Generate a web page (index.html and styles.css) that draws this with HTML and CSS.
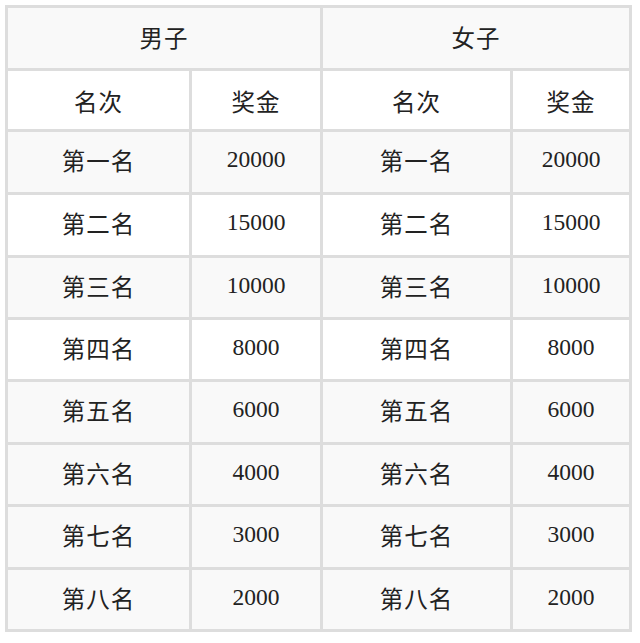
FILE: index.html
```html
<!DOCTYPE html>
<html lang="zh-CN">
<head>
<meta charset="utf-8">
<title>奖金</title>
<link rel="stylesheet" href="styles.css">
</head>
<body>
<table class="prize">
  <colgroup>
    <col class="c1"><col class="c2"><col class="c3"><col class="c4">
  </colgroup>
  <tr class="gray head"><td colspan="2">男子</td><td colspan="2">女子</td></tr>
  <tr class="white sub"><td>名次</td><td>奖金</td><td>名次</td><td>奖金</td></tr>
  <tr class="gray"><td>第一名</td><td class="num">20000</td><td>第一名</td><td class="num">20000</td></tr>
  <tr class="white"><td>第二名</td><td class="num">15000</td><td>第二名</td><td class="num">15000</td></tr>
  <tr class="gray"><td>第三名</td><td class="num">10000</td><td>第三名</td><td class="num">10000</td></tr>
  <tr class="white"><td>第四名</td><td class="num">8000</td><td>第四名</td><td class="num">8000</td></tr>
  <tr class="gray"><td>第五名</td><td class="num">6000</td><td>第五名</td><td class="num">6000</td></tr>
  <tr class="gray"><td>第六名</td><td class="num">4000</td><td>第六名</td><td class="num">4000</td></tr>
  <tr class="gray"><td>第七名</td><td class="num">3000</td><td>第七名</td><td class="num">3000</td></tr>
  <tr class="gray"><td>第八名</td><td class="num">2000</td><td>第八名</td><td class="num">2000</td></tr>
</table>
</body>
</html>
```
FILE: styles.css
```css
html, body {
  margin: 0;
  padding: 0;
  background: #ffffff;
}
body {
  padding: 5px;
}
.prize {
  table-layout: fixed;
  width: 627px;
  border-collapse: separate;
  border-spacing: 3px;
  background: #dddddd;
  font-family: "Liberation Serif", "Noto Sans CJK SC", serif;
  font-size: 23.5px;
  color: #222222;
}
.c1 { width: 181px; }
.c2 { width: 128px; }
.c3 { width: 187px; }
.c4 { width: 116px; }
.prize td {
  box-sizing: border-box;
  padding: 2px 0 0;
  height: 60px;
  text-align: center;
  vertical-align: middle;
  line-height: 1;
  letter-spacing: 1px;
}
.prize td.num {
  padding: 0 0 4px;
  letter-spacing: 0;
}
.prize .head td { padding-top: 4px; }
.prize .sub td { padding-top: 8px; }
.prize tr:nth-child(2) td { height: 58px; }
.prize tr:nth-child(5) td,
.prize tr:nth-child(6) td,
.prize tr:nth-child(8) td,
.prize tr:nth-child(10) td { height: 59px; }
.gray td { background: #f9f9f9; }
.white td { background: #ffffff; }
```
